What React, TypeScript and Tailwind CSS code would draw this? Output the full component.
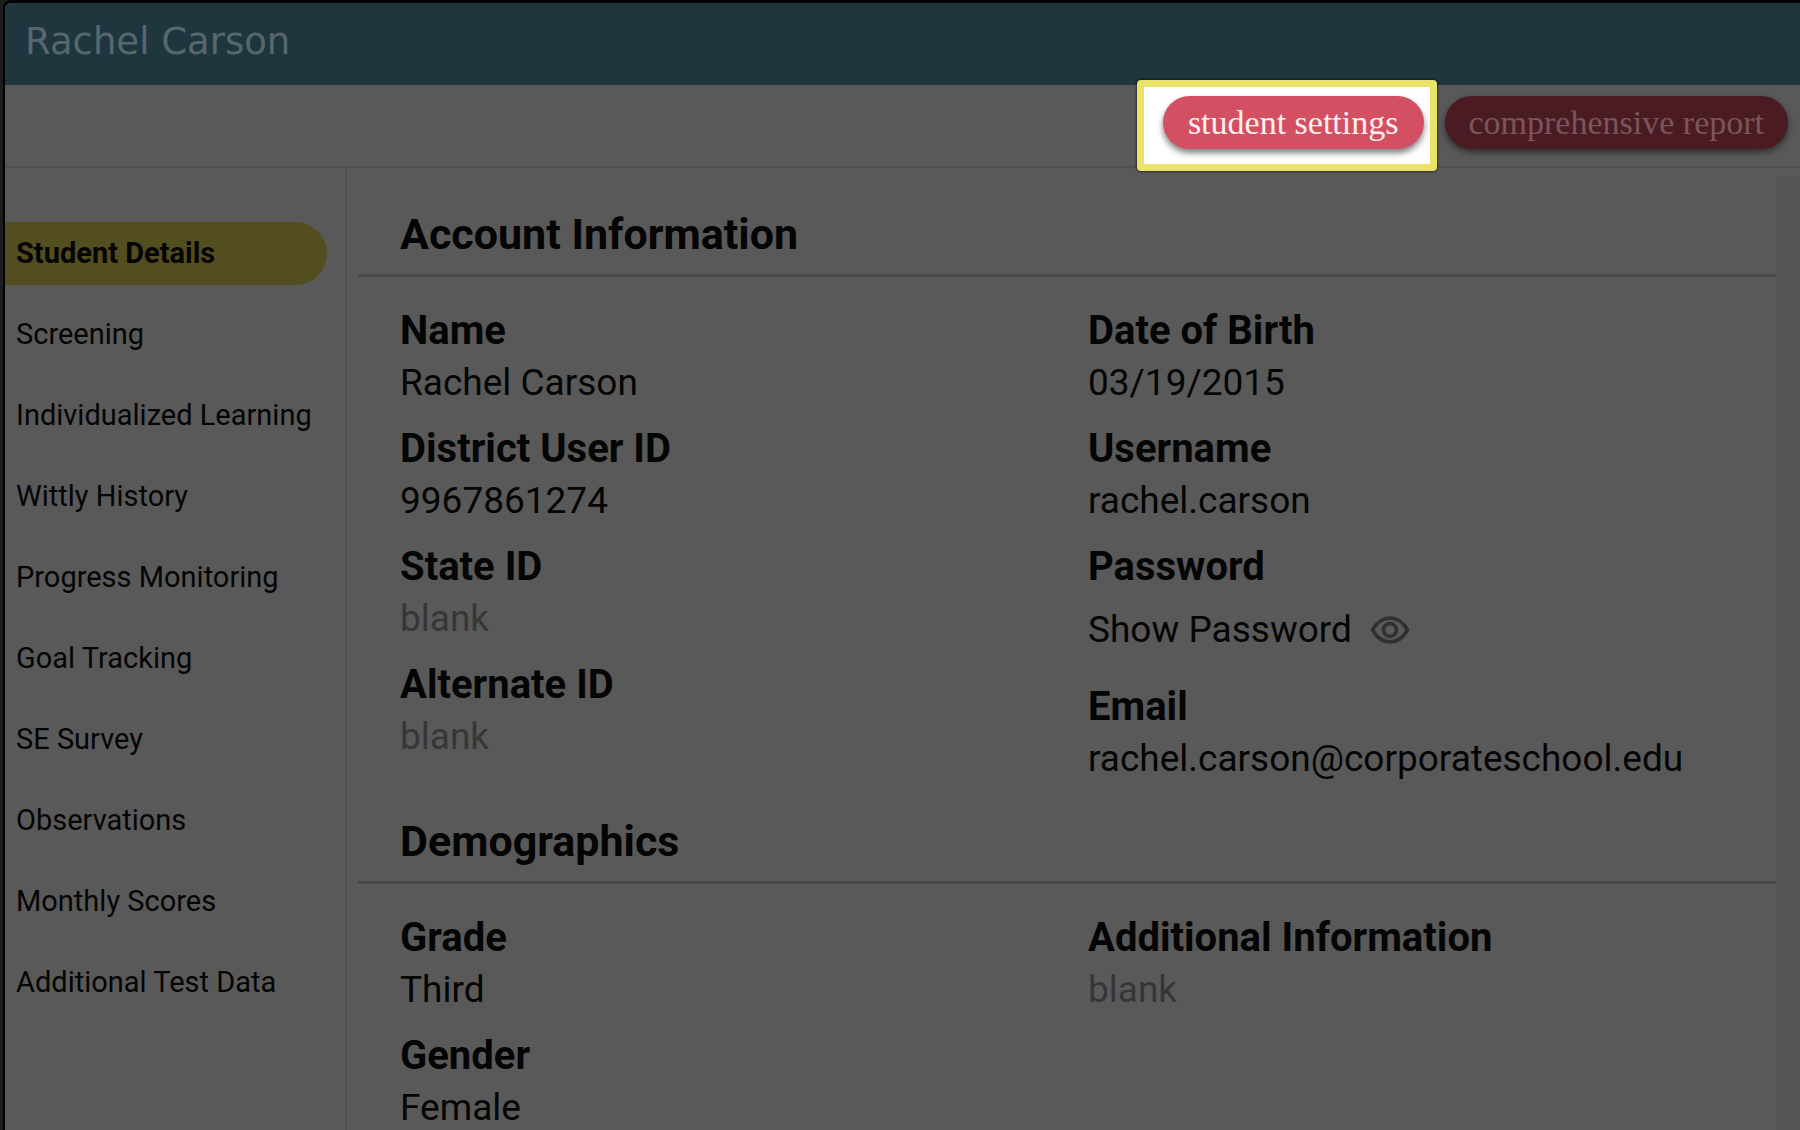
const navItems = [
  "Student Details",
  "Screening",
  "Individualized Learning",
  "Wittly History",
  "Progress Monitoring",
  "Goal Tracking",
  "SE Survey",
  "Observations",
  "Monthly Scores",
  "Additional Test Data",
];

function EyeIcon() {
  return (
    <svg
      viewBox="0 0 40 30"
      className="w-10 h-[30px] text-[#303030]"
      fill="none"
      stroke="currentColor"
      strokeWidth="3.6"
      aria-hidden="true"
    >
      <path d="M2.500 15C7 7 13 3 20 3S33 7 37.500 15C33 23 27 27 20 27S7 23 2.500 15Z" />
      <circle cx="20" cy="15" r="6.500" />
    </svg>
  );
}

function Section({ title, children }: { title: string; children: React.ReactNode }) {
  return (
    <section>
      <h2 className="pl-[42px] pb-4 text-[43px] leading-[48px] font-bold border-b-3 border-[#484848]">
        {title}
      </h2>
      <div className="grid grid-cols-2 pl-[42px] pt-7">{children}</div>
    </section>
  );
}

function Field({ label, value }: { label: string; value?: string }) {
  return (
    <div>
      <dt className="text-[40px] leading-[52px] font-bold">{label}</dt>
      <dd className={value ? "" : "text-[#363636]"}>{value ?? "blank"}</dd>
    </div>
  );
}

export default function App() {
  return (
    <div className="h-screen overflow-hidden flex bg-[#1c1c1c] font-['Roboto',sans-serif] text-[#050505]">
      <div className="flex-1 flex flex-col ml-[3px] border-l-2 border-t-3 border-black rounded-tl-lg overflow-hidden bg-[#595959]">
        <header className="h-[82px] shrink-0 bg-[#1f363e] px-5">
          <h1 className="text-[37px] leading-[78px] font-['DejaVu_Sans',sans-serif] text-[#56686e]">
            Rachel Carson
          </h1>
        </header>

        <div className="h-[83px] shrink-0 flex justify-end gap-[21px] pt-[11px] pr-3 border-b-2 border-[#505050] font-['Liberation_Serif',serif] text-[34px]">
          <div className="relative h-[53px]">
            <span className="absolute -top-4 -bottom-[22px] -left-[26px] -right-[13px] bg-white border-[7px] border-[#ebe26b] rounded-[4px] shadow-[0_0_2px_1px_#00000080]" />
            <button
              type="button"
              className="relative h-[53px] px-[25px] rounded-full bg-[#d35062] text-[#fff0f2] leading-[50px] shadow-[0_4px_6px_#00000080]"
            >
              student settings
            </button>
          </div>
          <button
            type="button"
            className="h-[53px] px-6 rounded-full bg-[#4b1b24] text-[#7c555b] leading-[50px] shadow-[0_3px_6px_#00000080]"
          >
            comprehensive report
          </button>
        </div>

        <div className="flex-1 flex min-h-0">
          <nav className="w-[342px] shrink-0 border-r-2 border-[#505050] pt-[54px] pr-[18px] flex flex-col gap-[18px] text-[29px] leading-[63px] whitespace-nowrap">
            {navItems.map((item, i) => (
              <a
                key={item}
                href="#"
                className={
                  i === 0
                    ? "pl-[11px] rounded-r-full bg-[#534e20] font-bold"
                    : "pl-[11px]"
                }
              >
                {item}
              </a>
            ))}
          </nav>

          <main className="flex-1 min-w-0 pl-[11px] pt-[42px] text-[37px] leading-[52px]">
            <Section title="Account Information">
              <dl className="flex flex-col gap-[14px]">
                <Field label="Name" value="Rachel Carson" />
                <Field label="District User ID" value="9967861274" />
                <Field label="State ID" />
                <Field label="Alternate ID" />
              </dl>
              <dl className="flex flex-col gap-[14px]">
                <Field label="Date of Birth" value="03/19/2015" />
                <Field label="Username" value="rachel.carson" />
                <div>
                  <dt className="text-[40px] leading-[52px] font-bold">Password</dt>
                  <dd>
                    <button type="button" className="h-[74px] flex items-center gap-[18px]">
                      Show Password
                      <EyeIcon />
                    </button>
                  </dd>
                </div>
                <Field label="Email" value="rachel.carson@corporateschool.edu" />
              </dl>
            </Section>

            <div className="mt-8">
              <Section title="Demographics">
                <dl className="flex flex-col gap-[14px]">
                  <Field label="Grade" value="Third" />
                  <Field label="Gender" value="Female" />
                </dl>
                <dl>
                  <Field label="Additional Information" />
                </dl>
              </Section>
            </div>
          </main>

          <div className="w-6 shrink-0 mt-2 bg-[#555555] border-l border-[#515151]" />
        </div>
      </div>
    </div>
  );
}
